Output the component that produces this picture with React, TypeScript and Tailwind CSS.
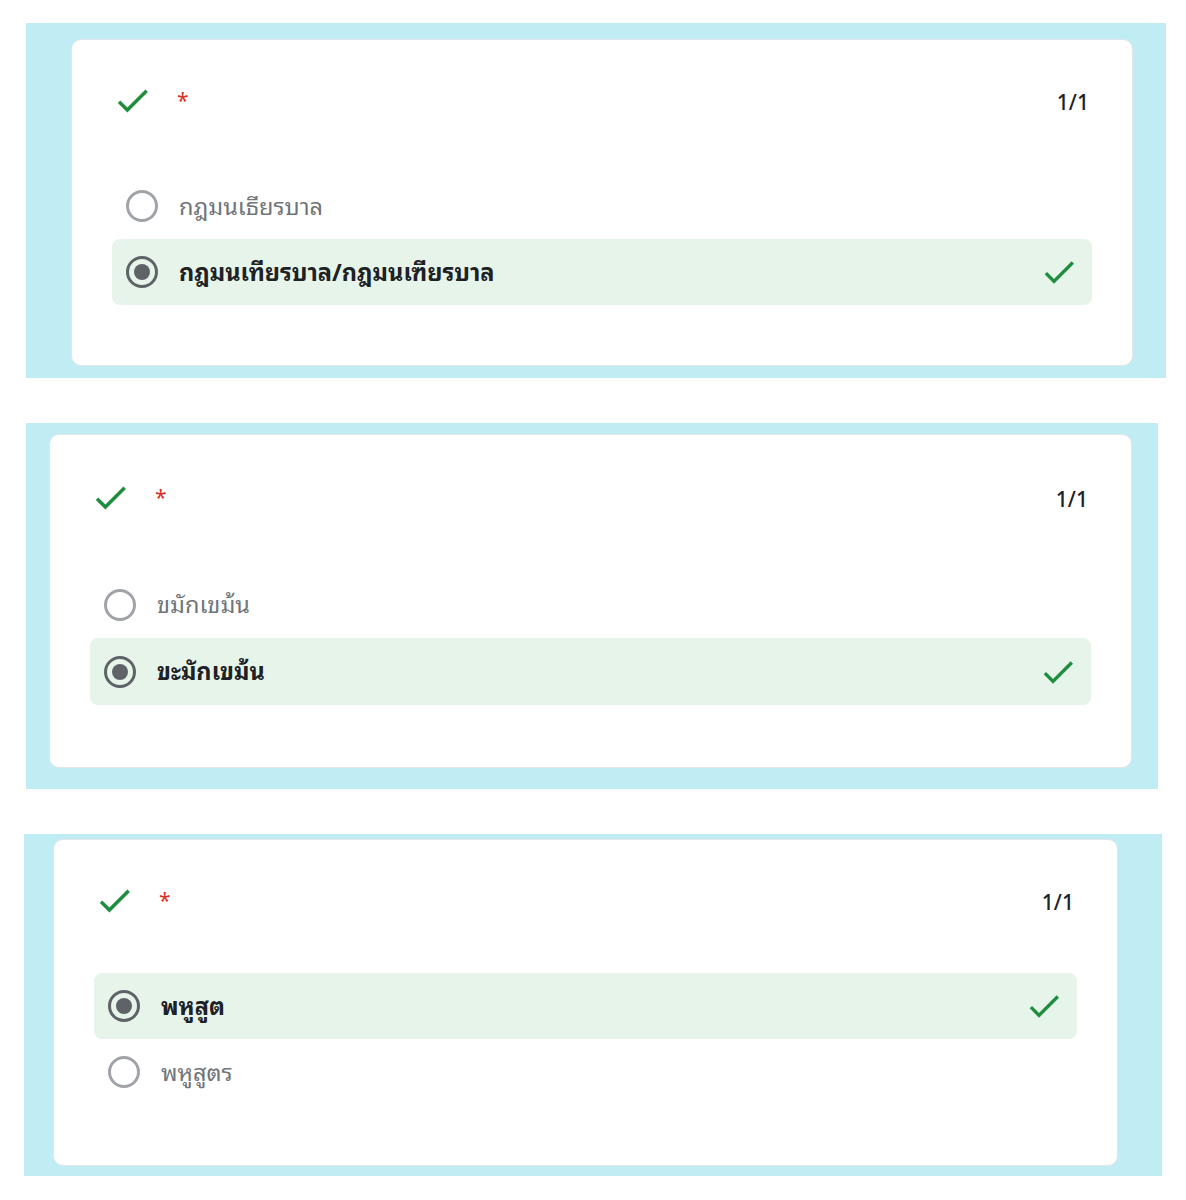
import React from 'react';

type Option = {
    label: string;
    selected: boolean;
};

type PanelProps = {
    outerClass: string;
    cardClass: string;
    listClass: string;
    rowClass: string;
    options: Option[];
};

const CheckIcon: React.FC<{ className?: string }> = ({ className }) => (
    <svg viewBox="0 0 24 24" className={className} fill="currentColor" aria-hidden="true">
        <path d="M9 16.17L4.83 12l-1.42 1.41L9 19 21 7l-1.41-1.41z" />
    </svg>
);

const Radio: React.FC<{ checked: boolean }> = ({ checked }) =>
    checked ? (
        <span className="flex h-8 w-8 shrink-0 items-center justify-center rounded-full border-[3px] border-[#5f6368]">
            <span className="h-4 w-4 rounded-full bg-[#5f6368]" />
        </span>
    ) : (
        <span className="h-8 w-8 shrink-0 rounded-full border-[3px] border-[#a0a4a9]" />
    );

const OptionRow: React.FC<{ option: Option; rowClass: string }> = ({ option, rowClass }) => (
    <div
        className={`flex items-center rounded-lg pl-[14px] pr-[13px] ${rowClass} ${
            option.selected ? 'bg-[#e6f4ea]' : ''
        }`}
    >
        <Radio checked={option.selected} />
        <span
            className={`ml-[21px] -mt-[3px] flex-1 text-[23.5px] leading-none ${
                option.selected ? 'font-bold text-[#202124]' : 'text-[#70757a]'
            }`}
        >
            {option.label}
        </span>
        {option.selected && <CheckIcon className="h-10 w-10 text-[#1e8e3e]" />}
    </div>
);

const Panel: React.FC<PanelProps> = ({ outerClass, cardClass, listClass, rowClass, options }) => (
    <div className={`bg-[#c0ecf3] ${outerClass}`}>
        <div className={`rounded-[10px] border border-[#e3e6e8] bg-white px-10 ${cardClass}`}>
            <div className="flex h-[41px] items-center">
                <CheckIcon className="h-[41px] w-[41px] text-[#1e8e3e]" />
                <span className="ml-[24px] -mt-1 text-[21px] leading-none text-[#d93025]">*</span>
                <span className="ml-auto mr-[3px] text-[21px] font-medium text-[#202124]">1/1</span>
            </div>
            <div className={`flex flex-col ${listClass}`}>
                {options.map((o) => (
                    <OptionRow key={o.label} option={o} rowClass={rowClass} />
                ))}
            </div>
        </div>
    </div>
);

export default function App() {
    return (
        <div
            className="flex min-h-[1200px] w-full flex-col gap-[45px] bg-white pt-[23px]"
            style={{
                fontFamily:
                    '"Noto Sans Thai Looped", Tahoma, Leelawadee, Garuda, Loma, "Noto Sans Thai", "Noto Sans", sans-serif',
            }}
        >
            <Panel
                outerClass="ml-[26px] w-[1140px] pl-[45px] pr-[33px] pt-[16px] pb-[12px]"
                cardClass="pt-[40px] pb-[60px]"
                listClass="mt-[52px]"
                rowClass="h-[66px]"
                options={[
                    { label: 'กฎมนเธียรบาล', selected: false },
                    { label: 'กฎมนเทียรบาล/กฎมนเฑียรบาล', selected: true },
                ]}
            />
            <Panel
                outerClass="ml-[26px] w-[1132px] pl-[23px] pr-[26px] pt-[11px] pb-[21px]"
                cardClass="pt-[42px] pb-[62px]"
                listClass="mt-[53px]"
                rowClass="h-[67px]"
                options={[
                    { label: 'ขมักเขม้น', selected: false },
                    { label: 'ขะมักเขม้น', selected: true },
                ]}
            />
            <Panel
                outerClass="ml-[24px] w-[1138px] pl-[29px] pr-[44px] pt-[5px] pb-[10px]"
                cardClass="pt-[40px] pb-[60px]"
                listClass="mt-[52px]"
                rowClass="h-[66px]"
                options={[
                    { label: 'พหูสูต', selected: true },
                    { label: 'พหูสูตร', selected: false },
                ]}
            />
        </div>
    );
}
